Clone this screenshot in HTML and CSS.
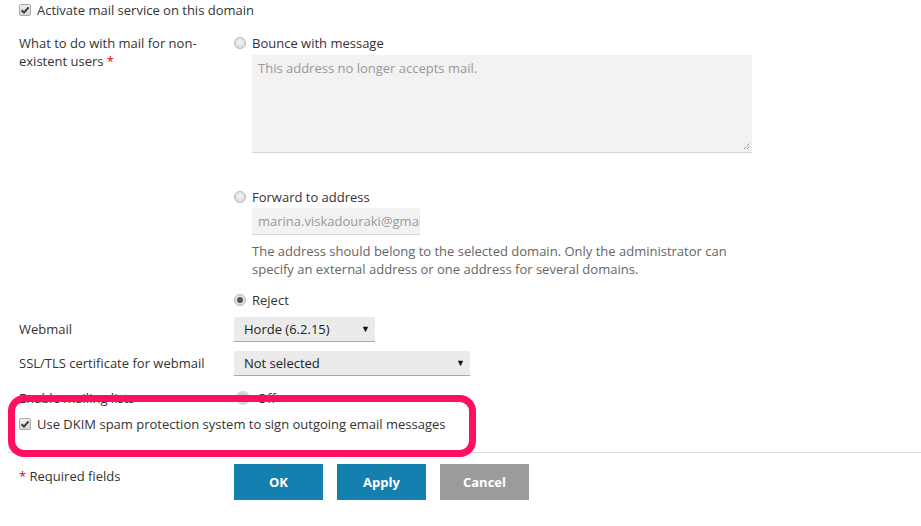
FILE: index.html
```html
<!DOCTYPE html>
<html>
<head>
<meta charset="utf-8">
<link rel="stylesheet" href="styles.css">
</head>
<body>
<div class="page">
  <div class="check-row first">
    <span class="cb"><svg viewBox="0 0 12 12" width="12" height="12"><path d="M2.6 6.2 L5 8.6 L9.6 3.4" fill="none" stroke="#3a3a3a" stroke-width="2"/></svg></span>
    <span>Activate mail service on this domain</span>
  </div>

  <div class="row nonexist">
    <div class="label">What to do with mail for non-existent users <span class="req">*</span></div>
    <div class="field">
      <div class="opt"><span class="radio"></span><span>Bounce with message</span></div>
      <div class="textarea">This address no longer accepts mail.<svg class="grip" viewBox="0 0 8 8" width="8" height="8"><path d="M1 7 L7 1 M4 7 L7 4" stroke="#666" stroke-width="1" stroke-dasharray="1 1"/></svg></div>
      <div class="opt forward"><span class="radio"></span><span>Forward to address</span></div>
      <div class="input">marina.viskadouraki@gmail.com</div>
      <div class="hint">The address should belong to the selected domain. Only the administrator can specify an external address or one address for several domains.</div>
      <div class="opt reject"><span class="radio on"></span><span>Reject</span></div>
    </div>
  </div>

  <div class="row sel-row webmail">
    <div class="label">Webmail</div>
    <div class="field"><div class="select small"><span>Horde (6.2.15)</span><span class="arrow">▼</span></div></div>
  </div>

  <div class="row sel-row ssl">
    <div class="label">SSL/TLS certificate for webmail</div>
    <div class="field"><div class="select wide"><span>Not selected</span><span class="arrow">▼</span></div></div>
  </div>

  <div class="row lists">
    <div class="label">Enable mailing lists</div>
    <div class="field toggle"><span class="knob"></span><span>Off</span></div>
  </div>

  <div class="check-row dkim">
    <span class="cb"><svg viewBox="0 0 12 12" width="12" height="12"><path d="M2.6 6.2 L5 8.6 L9.6 3.4" fill="none" stroke="#3a3a3a" stroke-width="2"/></svg></span>
    <span>Use DKIM spam protection system to sign outgoing email messages</span>
  </div>

  <div class="sep"></div>

  <div class="row footer">
    <div class="label reqnote"><span class="req">*</span> Required fields</div>
    <div class="buttons">
      <button class="btn primary">OK</button>
      <button class="btn primary">Apply</button>
      <button class="btn grey">Cancel</button>
    </div>
  </div>

  <div class="highlight"></div>
</div>
</body>
</html>
```

FILE: styles.css
```css
html, body {
  margin: 0;
  padding: 0;
  background: #fff;
}
body {
  font-family: "Open Sans", "Liberation Sans", sans-serif;
  font-size: 13px;
  line-height: 18px;
  color: #333;
}
.page {
  position: relative;
  width: 921px;
  height: 526px;
  overflow: hidden;
}
.check-row {
  display: flex;
  align-items: center;
  gap: 6px;
  padding-left: 19px;
  height: 18px;
}
.check-row.first { margin-top: 1px; }
.cb {
  width: 12px;
  height: 12px;
  box-sizing: border-box;
  border: 1px solid #a9a9a9;
  border-radius: 2px;
  background: linear-gradient(#f0f0f0, #d9d9d9);
  display: flex;
  align-items: center;
  justify-content: center;
  position: relative;
}
.cb svg { position: absolute; left: -1px; top: -1px; }
.row {
  display: grid;
  grid-template-columns: 215px 1fr;
  padding-left: 19px;
}
.nonexist { margin-top: 15px; }
.label { color: #333; }
.req { color: #d0021b; }
.opt {
  display: flex;
  align-items: center;
  gap: 6px;
  height: 18px;
}
.radio {
  width: 12px;
  height: 12px;
  box-sizing: border-box;
  border-radius: 50%;
  border: 1px solid #b5b5b5;
  background: radial-gradient(circle at 50% 40%, #f4f4f4, #d6d6d6);
  position: relative;
}
.radio.on::after {
  content: "";
  position: absolute;
  left: 2px;
  top: 2px;
  width: 6px;
  height: 6px;
  border-radius: 50%;
  background: #555;
}
.textarea {
  position: relative;
  margin: 3px 0 0 18px;
  width: 500px;
  height: 98px;
  box-sizing: border-box;
  background: #f2f2f2;
  border-bottom: 1px solid #d6d6d6;
  padding: 4px 6px;
  color: #999;
}
.grip { position: absolute; right: 1px; bottom: 2px; }
.forward { margin-top: 35px; }
.input {
  margin: 2px 0 0 18px;
  width: 168px;
  height: 27px;
  box-sizing: border-box;
  background: #f2f2f2;
  border-bottom: 1px solid #d6d6d6;
  padding: 4px 6px;
  color: #999;
  white-space: nowrap;
  overflow: hidden;
}
.hint {
  margin: 7px 0 0 18px;
  width: 500px;
  color: #666;
}
.reject { margin-top: 13px; }
.sel-row { align-items: center; }
.sel-row .label { margin-top: -1px; }
.webmail { margin-top: 8px; }
.ssl { margin-top: 9px; }
.select {
  height: 25px;
  box-sizing: border-box;
  background: #ebebeb;
  border-bottom: 1px solid #a8a8a8;
  display: flex;
  align-items: center;
  justify-content: space-between;
  padding: 0 5px 0 10px;
  color: #222;
}
.select.small { width: 141px; }
.select.wide { width: 236px; }
.arrow { font-size: 9px; color: #111; }
.lists { margin-top: 13px; height: 18px; }
.toggle { display: flex; align-items: center; gap: 7px; }
.knob {
  width: 14px;
  height: 14px;
  margin-left: 2px;
  border-radius: 50%;
  background: #d3d6d8;
}
.dkim { margin-top: 8px; }
.sep {
  margin: 19px 0 0 8px;
  border-top: 1px solid #dcdcdc;
}
.footer { margin-top: 11px; align-items: start; }
.reqnote { padding-top: 3px; color: #333; }
.buttons { display: flex; gap: 14px; }
.btn {
  width: 89px;
  height: 36px;
  border: 0;
  padding: 0;
  color: #fff;
  font-family: "Open Sans", "Liberation Sans", sans-serif;
  font-size: 13px;
  font-weight: 700;
}
.btn.primary { background: #1480b0; }
.btn.grey { background: #9b9b9b; }
.highlight {
  position: absolute;
  left: 8px;
  top: 395px;
  width: 468px;
  height: 62px;
  box-sizing: border-box;
  border: 7px solid #ff0f5d;
  border-radius: 16px;
  pointer-events: none;
}
```
